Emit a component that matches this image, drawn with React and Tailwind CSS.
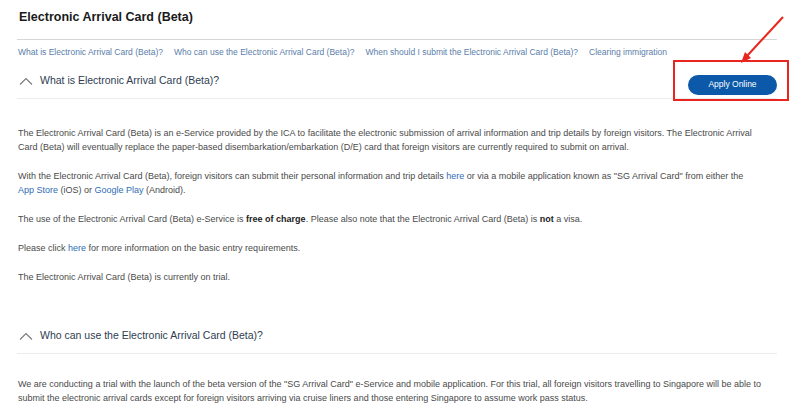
import React from 'react';

const font = { fontFamily: '"Liberation Sans", Arial, sans-serif' };

const navLinks = [
  'What is Electronic Arrival Card (Beta)?',
  'Who can use the Electronic Arrival Card (Beta)?',
  'When should I submit the Electronic Arrival Card (Beta)?',
  'Clearing immigration',
];

const Chevron = () => (
  <svg width="14" height="8" viewBox="0 0 14 8" className="shrink-0">
    <path d="M1 7.5 L7 1.5 L13 7.5" fill="none" stroke="#7a7a7a" strokeWidth="1.1" />
  </svg>
);

const SectionHeader = ({ title, children, className = '' }) => (
  <div className={`flex items-center justify-between border-b border-[#ececec] ${className}`}>
    <div className="flex items-center gap-[7px] pl-[2px]">
      <Chevron />
      <span className="text-[10.5px] text-[#2e3d52]">{title}</span>
    </div>
    {children}
  </div>
);

const Link = ({ children }) => <span className="text-[#2f6db5]">{children}</span>;

const App = () => {
  return (
    <div className="relative w-[800px] h-[411px] overflow-hidden bg-white" style={font}>
      <div className="pl-[17px] pr-[23px] pt-[9px]">
        <h1 className="pl-[2px] text-[12.5px] leading-[16px] font-bold text-[#1a1a1a]">
          Electronic Arrival Card (Beta)
        </h1>
        <div className="mt-[14px] border-t border-[#d6d6d6]" />

        {/* Anchor links */}
        <div className="flex gap-[11px] pl-[1px] pt-[6px] text-[8.5px] leading-[12px] text-[#5a7eaa]">
          {navLinks.map((l) => (
            <span key={l}>{l}</span>
          ))}
        </div>

        <SectionHeader title="What is Electronic Arrival Card (Beta)?" className="mt-[5px] h-[36px]">
          <div className="relative mt-[4px] mr-0">
            <button className="w-[89px] h-[20px] rounded-full bg-[#0b59a8] text-white text-[8.5px]">
              Apply Online
            </button>
            <div className="absolute -left-[15px] -right-[12px] -top-[10px] -bottom-[6px] border-2 border-[#e8261f]" />
          </div>
        </SectionHeader>

        <div className="pl-[1px] mt-[27px] text-[9px] leading-[14px] text-[#4a4a4a]">
          <p className="mb-[15px] whitespace-nowrap">
            The Electronic Arrival Card (Beta) is an e-Service provided by the ICA to facilitate the electronic submission of arrival information and trip details by foreign visitors. The Electronic Arrival
            <br />
            Card (Beta) will eventually replace the paper-based disembarkation/embarkation (D/E) card that foreign visitors are currently required to submit on arrival.
          </p>
          <p className="mb-[15px] whitespace-nowrap">
            With the Electronic Arrival Card (Beta), foreign visitors can submit their personal information and trip details <Link>here</Link> or via a mobile application known as "SG Arrival Card" from either the
            <br />
            <Link>App Store</Link> (iOS) or <Link>Google Play</Link> (Android).
          </p>
          <p className="mb-[15px]">
            The use of the Electronic Arrival Card (Beta) e-Service is <b className="text-[#222]">free of charge</b>. Please also note that the Electronic Arrival Card (Beta) is <b className="text-[#222]">not</b> a visa.
          </p>
          <p className="mb-[15px]">
            Please click <Link>here</Link> for more information on the basic entry requirements.
          </p>
          <p>The Electronic Arrival Card (Beta) is currently on trial.</p>
        </div>

        <SectionHeader title="Who can use the Electronic Arrival Card (Beta)?" className="mt-[34px] h-[36px]" />

        <div className="pl-[1px] mt-[23px] text-[9px] leading-[14px] text-[#4a4a4a]">
          <p className="whitespace-nowrap">
            We are conducting a trial with the launch of the beta version of the "SG Arrival Card" e-Service and mobile application. For this trial, all foreign visitors travelling to Singapore will be able to
            <br />
            submit the electronic arrival cards except for foreign visitors arriving via cruise liners and those entering Singapore to assume work pass status.
          </p>
        </div>
      </div>

      {/* Red annotation arrow */}
      <svg className="absolute inset-0 pointer-events-none" width="800" height="411">
        <line x1="783" y1="17" x2="747" y2="56" stroke="#e8261f" strokeWidth="2" />
        <polygon points="741,63 751,58 745,52" fill="#e8261f" />
      </svg>
    </div>
  );
};

export default App;
